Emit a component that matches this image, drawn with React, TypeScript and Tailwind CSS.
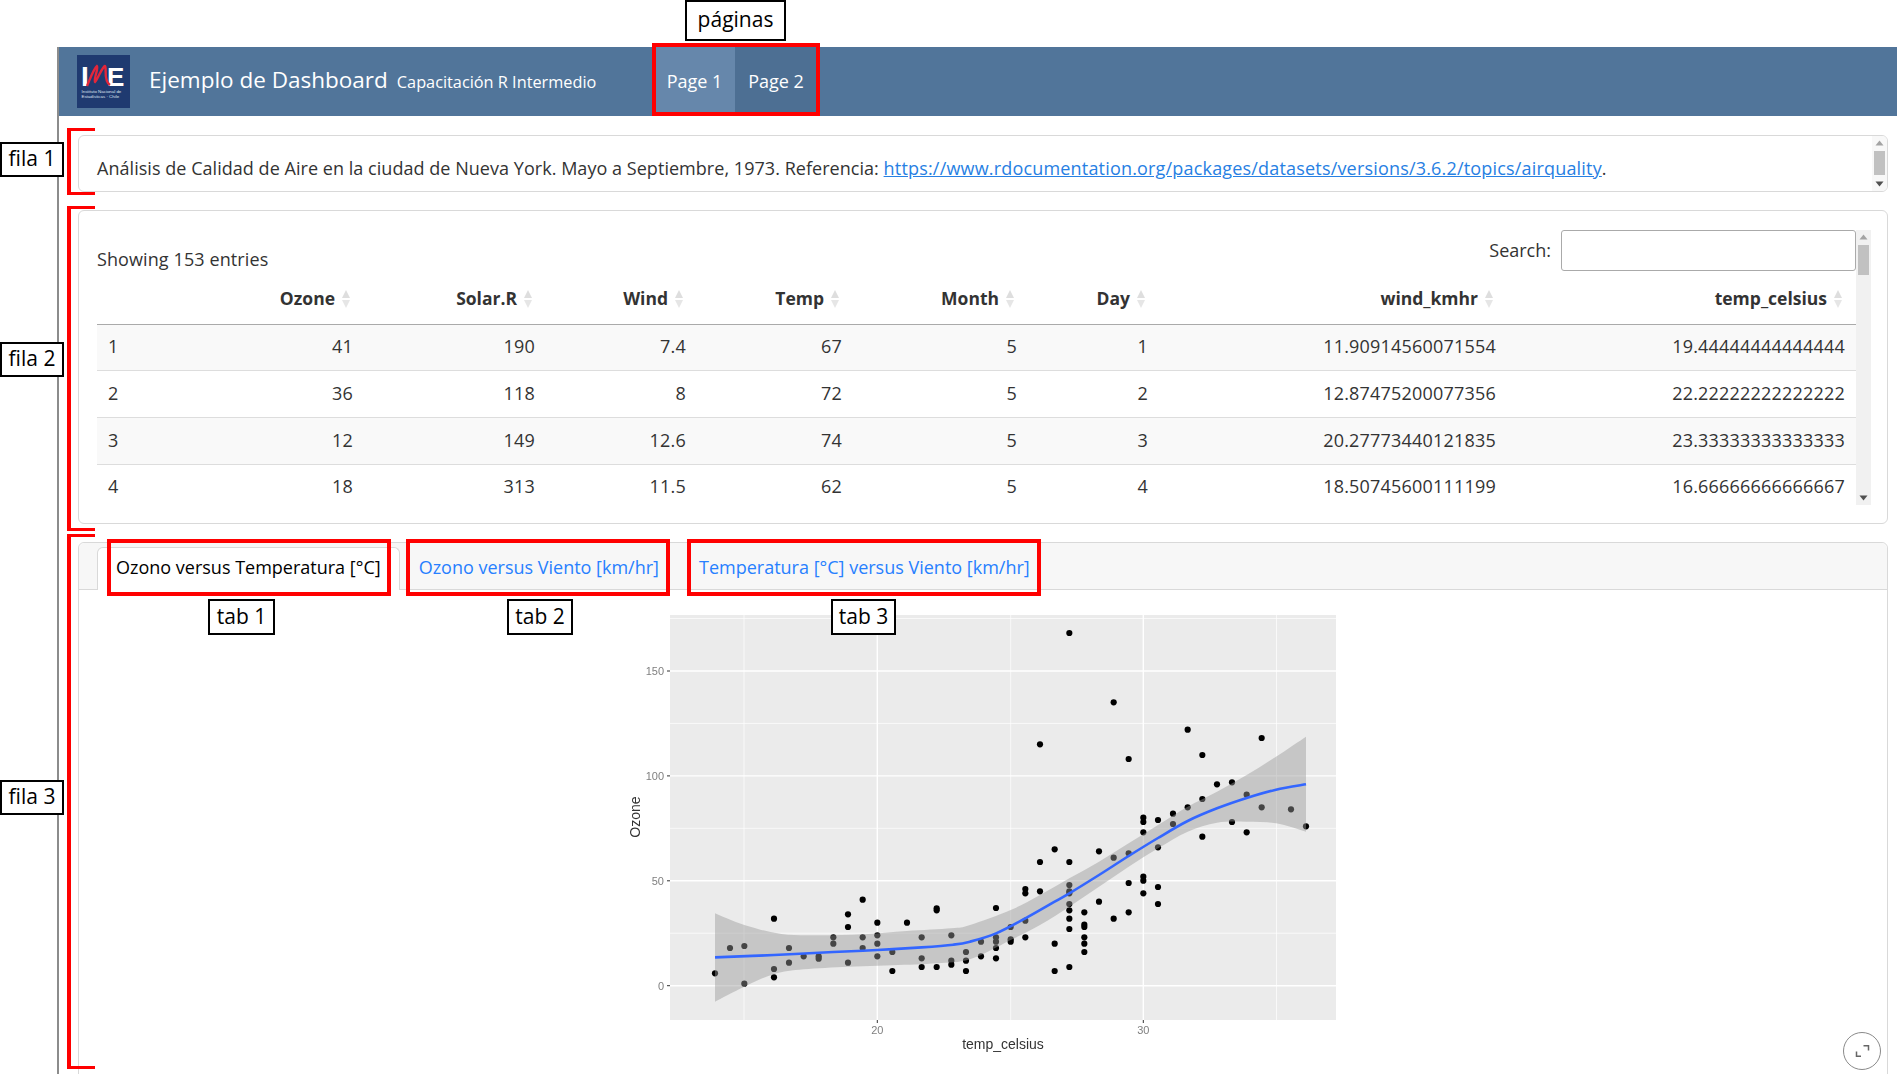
import type { ReactNode } from "react";

type Pt = [number, number];

const rows = [
  ["1", "41", "190", "7.4", "67", "5", "1", "11.90914560071554", "19.44444444444444"],
  ["2", "36", "118", "8", "72", "5", "2", "12.87475200077356", "22.22222222222222"],
  ["3", "12", "149", "12.6", "74", "5", "3", "20.27773440121835", "23.33333333333333"],
  ["4", "18", "313", "11.5", "62", "5", "4", "18.50745600111199", "16.66666666666667"],
];

const headers = ["", "Ozone", "Solar.R", "Wind", "Temp", "Month", "Day", "wind_kmhr", "temp_celsius"];
const colWidths = ["w-[100px]", "w-[167px]", "w-[182px]", "w-[151px]", "w-[156px]", "w-[175px]", "w-[131px]", "w-[348px]", "w-[349px]"];

// points read off the plot, [x, y] in page pixels
const left = (p: Pt[]): Pt[] => p.map(([x, y]) => [620 + x / 3, 600 + y / 3]);
const right = (p: Pt[]): Pt[] => p.map(([x, y]) => [970 + x / 3, 600 + y / 3]);

const points: Pt[] = [
  ...left([
    [285, 1120], [330, 1044], [373, 1038], [373, 1151], [462, 956], [462, 1107], [462, 1132], [507, 1044], [507, 1088],
    [551, 1069], [596, 1069], [596, 1076], [640, 1012], [640, 1031], [684, 943], [684, 981], [684, 1088], [728, 899],
    [728, 1012], [728, 1044], [772, 968], [772, 1006], [772, 1031], [772, 1069], [817, 1056], [817, 1113], [861, 968],
    [905, 1012], [905, 1075], [905, 1101], [950, 925], [950, 931], [950, 1101], [994, 1006], [994, 1082], [994, 1094],
    [1038, 1056], [1038, 1082], [1038, 1113],
  ]),
  ...right([
    [298, 99], [431, 307], [210, 433], [653, 389], [875, 414], [697, 465], [476, 477], [741, 553], [786, 547], [830, 584],
    [875, 622], [963, 628], [1008, 679], [830, 697], [697, 710], [786, 666], [697, 597], [653, 622], [609, 641], [609, 672],
    [564, 660], [520, 653], [520, 666], [520, 697], [564, 742], [476, 760], [431, 773], [387, 754], [254, 748], [210, 786],
    [298, 786], [298, 855], [298, 874], [298, 880], [166, 867], [166, 880], [210, 874], [78, 924], [298, 912], [298, 931],
    [298, 956], [298, 987], [387, 905], [431, 956], [476, 937], [476, 849], [520, 830], [520, 842], [520, 880], [564, 861],
    [564, 912], [343, 937], [343, 974], [343, 981], [343, 1012], [343, 1031], [343, 1056], [298, 1101], [254, 1113], [254, 1031],
    [166, 962], [166, 1012], [122, 981], [122, 1018], [122, 1025], [78, 1012], [78, 1025], [78, 1044], [78, 1075], [33, 1025], [33, 1069],
  ]),
];

const upper: Pt[] = [
  ...left([[285, 940], [373, 975], [484, 1002], [596, 1006], [728, 1003], [861, 993], [994, 985]]),
  ...right([[0, 975], [122, 930], [210, 885], [298, 835], [387, 785], [476, 730], [564, 675], [653, 620], [741, 575], [830, 525], [918, 470], [1008, 410]]),
];
const lower: Pt[] = [
  ...left([[285, 1205], [373, 1160], [462, 1122], [551, 1108], [684, 1100], [817, 1096], [950, 1090]]),
  ...right([[0, 1078], [122, 1020], [210, 975], [298, 920], [387, 860], [476, 800], [564, 745], [653, 695], [741, 668], [830, 665], [918, 670], [1008, 695]]),
];
const fit: Pt[] = [
  ...left([[285, 1072], [462, 1065], [640, 1056], [772, 1050], [905, 1042], [1000, 1034]]),
  ...right([[0, 1025], [78, 1000], [166, 955], [254, 905], [298, 880], [387, 825], [476, 768], [564, 714], [653, 663], [741, 625], [830, 594], [918, 569], [1008, 553]]),
];

function smooth(p: Pt[], move = true) {
  let d = move ? `M${p[0][0]} ${p[0][1]}` : `L${p[0][0]} ${p[0][1]}`;
  for (let i = 0; i < p.length - 1; i++) {
    const a = p[Math.max(i - 1, 0)];
    const b = p[i];
    const c = p[i + 1];
    const e = p[Math.min(i + 2, p.length - 1)];
    d += `C${b[0] + (c[0] - a[0]) / 6} ${b[1] + (c[1] - a[1]) / 6} ${c[0] - (e[0] - b[0]) / 6} ${c[1] - (e[1] - b[1]) / 6} ${c[0]} ${c[1]}`;
  }
  return d;
}

function Logo() {
  return (
    <svg width="53" height="53" viewBox="0 0 53 53" className="shrink-0">
      <rect width="53" height="53" fill="#1f3a70" />
      <text x="4" y="31" fontSize="28" fontWeight="700" fill="#fff" fontFamily="Liberation Sans, sans-serif">I</text>
      <text x="30" y="31" fontSize="26" fontWeight="700" fill="#fff" fontFamily="Liberation Sans, sans-serif">E</text>
      <path d="M10 31C13 24 17 13 20 11C22 12 16 26 18 27C21 24 25 12 28 11C30 12 26 26 33 30" fill="none" stroke="#e3263a" strokeWidth="2.4" />
      <text x="4.5" y="38" fontSize="4.4" fill="#dfe5f0" fontFamily="Liberation Sans, sans-serif">Instituto Nacional de</text>
      <text x="4.5" y="43" fontSize="4.4" fill="#dfe5f0" fontFamily="Liberation Sans, sans-serif">Estadísticas · Chile</text>
    </svg>
  );
}

function SortIcon() {
  return (
    <svg width="8" height="18" viewBox="0 0 8 18" className="ml-[7px] inline-block align-[-3px]">
      <path d="M4 0L8 8H0Z" fill="#dedede" />
      <path d="M4 18L8 10H0Z" fill="#e6e6e6" />
    </svg>
  );
}

function Scrollbar({ thumb, bg }: { thumb: string; bg: string }) {
  return (
    <div className={`flex w-[15px] shrink-0 flex-col items-center ${bg}`}>
      <svg width="9" height="15" viewBox="0 0 9 15" className="shrink-0">
        <path d="M4.5 4.5L8.5 9.5H0.5Z" fill="#a3a3a3" />
      </svg>
      <div className={`w-[11px] shrink-0 bg-[#c1c1c1] ${thumb}`} />
      <svg width="9" height="15" viewBox="0 0 9 15" className="mt-auto shrink-0">
        <path d="M4.5 10.5L8.5 5.5H0.5Z" fill="#505050" />
      </svg>
    </div>
  );
}

function Label({ className, children }: { className: string; children: ReactNode }) {
  return (
    <div className={`absolute flex items-center justify-center border-2 border-black bg-white pb-[1px] text-[21px] text-black ${className}`}>
      {children}
    </div>
  );
}

function Bracket({ className }: { className: string }) {
  return <div className={`absolute left-[67px] w-[28px] border-y-[3px] border-l-4 border-[#ff0000] ${className}`} />;
}

function Plot() {
  const xs = { minor: [744, 1010.7, 1276.5], major: [877.3, 1143.3] };
  const ys = { minor: [933.2, 828.3, 723.4, 618.5], major: [985.7, 880.8, 775.9, 671] };
  return (
    <svg width="730" height="460" viewBox="618 610 730 460" className="mx-auto block blur-[0.35px]">
      <rect x="670" y="615" width="666" height="405" fill="#ebebeb" />
      {xs.minor.map((x) => (
        <line key={x} x1={x} x2={x} y1="615" y2="1020" stroke="#fff" strokeWidth="0.7" />
      ))}
      {ys.minor.map((y) => (
        <line key={y} x1="670" x2="1336" y1={y} y2={y} stroke="#fff" strokeWidth="0.7" />
      ))}
      {xs.major.map((x) => (
        <line key={x} x1={x} x2={x} y1="615" y2="1020" stroke="#fff" strokeWidth="1.4" />
      ))}
      {ys.major.map((y) => (
        <line key={y} x1="670" x2="1336" y1={y} y2={y} stroke="#fff" strokeWidth="1.4" />
      ))}
      {points.map(([x, y], i) => (
        <circle key={i} cx={x} cy={y} r="3.1" fill="#000" />
      ))}
      <path d={`${smooth(upper)}${smooth([...lower].reverse(), false)}Z`} fill="#999" fillOpacity="0.45" />
      <path d={smooth(fit)} fill="none" stroke="#3366ff" strokeWidth="2.6" />
      {ys.major.map((y, i) => (
        <g key={y}>
          <line x1="667" x2="670" y1={y} y2={y} stroke="#333" strokeWidth="1" />
          <text x="664" y={y + 4} textAnchor="end" fontSize="11" fill="#7f7f7f" fontFamily="Liberation Sans, sans-serif">
            {["0", "50", "100", "150"][i]}
          </text>
        </g>
      ))}
      {xs.major.map((x, i) => (
        <g key={x}>
          <line x1={x} x2={x} y1="1020" y2="1023" stroke="#333" strokeWidth="1" />
          <text x={x} y="1034" textAnchor="middle" fontSize="11" fill="#7f7f7f" fontFamily="Liberation Sans, sans-serif">
            {["20", "30"][i]}
          </text>
        </g>
      ))}
      <text x="1003" y="1049" textAnchor="middle" fontSize="14" fill="#333" fontFamily="Liberation Sans, sans-serif">temp_celsius</text>
      <text transform="translate(640 817) rotate(-90)" textAnchor="middle" fontSize="14" fill="#333" fontFamily="Liberation Sans, sans-serif">Ozone</text>
    </svg>
  );
}

export default function App() {
  return (
    <div className="relative h-screen w-full overflow-hidden bg-white pt-[47px] font-['Open_Sans',sans-serif] text-[18px] text-[#333]">
      <div className="ml-[57px] flex h-full flex-col border-l-2 border-[#8c8c8c]">
        <nav className="flex h-[69px] shrink-0 items-center bg-[#51759a] pl-[18px] text-white">
          <Logo />
          <div className="ml-[19px] flex w-[505px] items-center">
            <span className="pb-[3px] text-[22.5px]">Ejemplo de Dashboard</span>
            <span className="ml-[9px] pt-[2px] text-[16.3px]">Capacitación R Intermedio</span>
          </div>
          <div className="flex h-full">
            <div className="flex w-[81px] items-center justify-center bg-[#6687ab] pb-[1px]">Page 1</div>
            <div className="flex w-[82px] items-center justify-center bg-[#4d6f93] pb-[1px]">Page 2</div>
          </div>
        </nav>

        <main className="ml-[19px] mr-[9px] flex flex-col gap-[18px] pt-[19px]">
          <section className="flex h-[57px] justify-between overflow-hidden rounded-[6px] border border-[#d9d9d9]">
            <p className="whitespace-nowrap pl-[18px] pt-[19px] tracking-[0.04px]">
              Análisis de Calidad de Aire en la ciudad de Nueva York. Mayo a Septiembre, 1973. Referencia:{" "}
              <a className="tracking-[0.18px] text-[#2780e3] underline">https://www.rdocumentation.org/packages/datasets/versions/3.6.2/topics/airquality</a>.
            </p>
            <Scrollbar thumb="h-[24px]" bg="bg-[#f8f8f8]" />
          </section>

          <section className="flex h-[314px] overflow-hidden rounded-[6px] border border-[#d9d9d9] pb-[18px] pl-[18px] pr-[17px] pt-[19px]">
            <div className="w-[1759px] shrink-0 overflow-hidden">
              <div className="flex h-[45px] justify-between">
                <span className="pt-[16px] tracking-[0.1px]">Showing 153 entries</span>
                <label className="flex h-[41px] items-center gap-[10px]">
                  Search:
                  <span className="h-[41px] w-[295px] rounded-[3px] border border-[#aaa] bg-white" />
                </label>
              </div>
              <table className="w-[1759px] table-fixed">
                <colgroup>
                  {colWidths.map((w, i) => (
                    <col key={i} className={w} />
                  ))}
                </colgroup>
                <thead>
                  <tr className="h-[49px] border-b border-[#aaa]">
                    {headers.map((h) => (
                      <th key={h} className="pb-[2px] pr-[14px] text-right text-[17.5px] font-bold">
                        {h && (
                          <>
                            {h}
                            <SortIcon />
                          </>
                        )}
                      </th>
                    ))}
                  </tr>
                </thead>
                <tbody>
                  {rows.map((r, i) => (
                    <tr key={r[0]} className={`h-[46.7px] border-b border-[#ddd] ${i % 2 === 0 ? "bg-[#f9f9f9]" : ""}`}>
                      {r.map((c, j) => (
                        <td key={j} className={j === 0 ? "pb-[1px] pl-[11px] text-left" : "pb-[1px] pr-[11px] text-right tracking-[0.2px]"}>
                          {c}
                        </td>
                      ))}
                    </tr>
                  ))}
                </tbody>
              </table>
            </div>
            <Scrollbar thumb="h-[30px]" bg="bg-[#f1f1f1]" />
          </section>

          <section className="h-[560px] shrink-0 rounded-[6px] border border-[#d9d9d9]">
            <div className="flex h-[47px] items-end rounded-t-[6px] border-b border-[#d9d9d9] bg-[#f7f7f7] pl-[18px]">
              <div className="-mb-px flex h-[43px] items-center rounded-t-[6px] border border-b-0 border-[#d9d9d9] bg-white px-[18px] pb-[3px] text-black">
                Ozono versus Temperatura [°C]
              </div>
              <div className="flex h-[42px] items-center border border-transparent px-[18px] pb-[2px] text-[#2780ff]">Ozono versus Viento [km/hr]</div>
              <div className="ml-[2px] flex h-[42px] items-center border border-transparent px-[18px] pb-[2px] text-[#2780ff]">Temperatura [°C] versus Viento [km/hr]</div>
            </div>
            <div className="pt-[20px]">
              <Plot />
            </div>
          </section>
        </main>
      </div>

      {/* fullscreen button */}
      <div className="absolute left-[1843px] top-[1032px] flex h-[38px] w-[38px] items-center justify-center rounded-full border border-[#8a8a8a] bg-white">
        <svg width="16" height="16" viewBox="0 0 16 16" fill="none" stroke="#666" strokeWidth="1.5">
          <path d="M9.5 2.8H14.5V7.5M7 13.3H2.5V8.5" />
        </svg>
      </div>

      {/* annotations drawn over the dashboard */}
      <Label className="left-[685px] top-0 h-[41px] w-[101px]">páginas</Label>
      <div className="absolute left-[652px] top-[43px] h-[73px] w-[168px] border-4 border-[#ff0000]" />
      <Label className="left-0 top-[142px] h-[35px] w-[64px]">fila 1</Label>
      <Label className="left-0 top-[342px] h-[35px] w-[64px]">fila 2</Label>
      <Label className="left-0 top-[780px] h-[35px] w-[64px]">fila 3</Label>
      <Bracket className="top-[128px] h-[67px]" />
      <Bracket className="top-[206px] h-[325px]" />
      <Bracket className="top-[534px] h-[535px]" />
      <div className="absolute left-[107px] top-[539px] h-[57px] w-[284px] border-4 border-[#ff0000]" />
      <div className="absolute left-[406px] top-[539px] h-[57px] w-[264px] border-4 border-[#ff0000]" />
      <div className="absolute left-[687px] top-[539px] h-[57px] w-[354px] border-4 border-[#ff0000]" />
      <Label className="left-[208px] top-[599px] h-[36px] w-[67px]">tab 1</Label>
      <Label className="left-[507px] top-[599px] h-[36px] w-[66px]">tab 2</Label>
      <Label className="left-[831px] top-[599px] h-[36px] w-[65px]">tab 3</Label>
    </div>
  );
}
